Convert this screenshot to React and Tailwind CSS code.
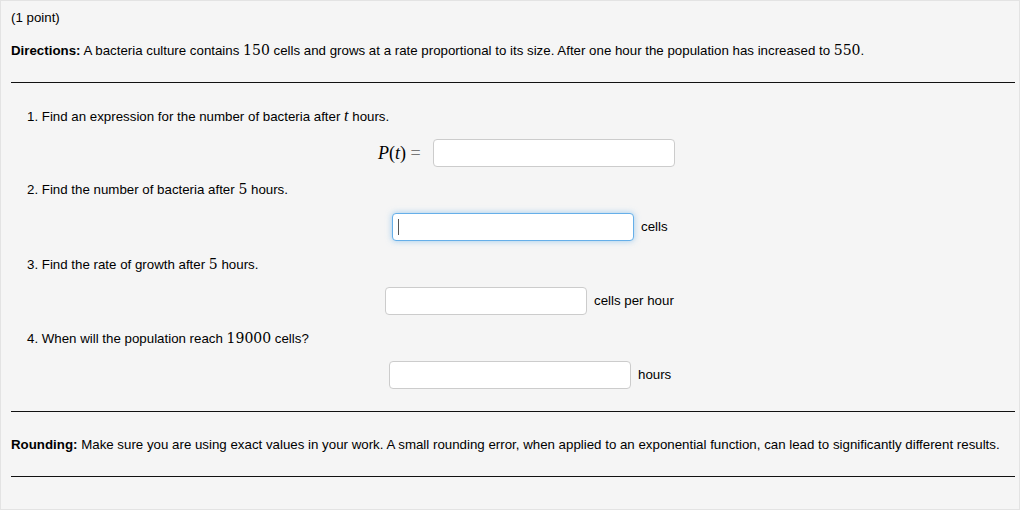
import React from 'react'

const sans = { fontFamily: '"Liberation Sans", Arial, sans-serif' }
const serif = { fontFamily: '"DejaVu Serif", "Liberation Serif", serif' }
const tserif = { fontFamily: '"Liberation Serif", "Times New Roman", serif' }

function M({ children, italic }) {
  return (
    <span
      style={italic ? tserif : serif}
      className={`leading-none ${italic ? 'italic text-[16px]' : 'text-[14px]'}`}
    >
      {children}
    </span>
  )
}

function Blank({ width, focused }) {
  return (
    <div
      className={`relative h-[28px] bg-white rounded-[4px] border ${
        focused
          ? 'border-[#66afe9] shadow-[0_0_6px_rgba(102,175,233,0.6)]'
          : 'border-[#cccccc]'
      }`}
      style={{ width }}
    >
      {focused && <span className="absolute left-[5px] top-[5px] w-px h-[16px] bg-[#555]" />}
    </div>
  )
}

function Rule({ className = '' }) {
  return <div className={`h-px bg-[#111] ${className}`} />
}

export default function App() {
  return (
    <div className="w-[1024px] h-[514px] bg-white text-black text-[13.3px]" style={sans}>
      <div className="w-[1020px] h-[510px] bg-[#f5f5f5] border border-[#e3e3e3] pt-[9px] pl-[10px] pr-[4px]">
        <p className="leading-[16px]">(1 point)</p>

        <p className="leading-[16px] mt-[17px]">
          <b>Directions:</b> A bacteria culture contains <M>150</M> cells and grows at a rate
          proportional to its size. After one hour the population has increased to <M>550</M>.
        </p>

        <Rule className="mt-[23px]" />

        <div className="pl-[16px]">
          <p className="leading-[16px] mt-[25px]">
            1. Find an expression for the number of bacteria after <M italic>t</M> hours.
          </p>
          <div className="flex items-center ml-[351px] mt-[14px]">
            <span style={tserif} className="text-[18px] leading-none mr-[12px]">
              <i>P</i>(<i>t</i>) <span className="text-[#777]">=</span>
            </span>
            <Blank width={242} />
          </div>

          <p className="leading-[16px] mt-[15px]">
            2. Find the number of bacteria after <M>5</M> hours.
          </p>
          <div className="flex items-center ml-[365px] mt-[15px]">
            <Blank width={242} focused />
            <span className="ml-[7px]">cells</span>
          </div>

          <p className="leading-[16px] mt-[16px]">
            3. Find the rate of growth after <M>5</M> hours.
          </p>
          <div className="flex items-center ml-[358px] mt-[14px]">
            <Blank width={202} />
            <span className="ml-[7px]">cells per hour</span>
          </div>

          <p className="leading-[16px] mt-[16px]">
            4. When will the population reach <M>19000</M> cells?
          </p>
          <div className="flex items-center ml-[362px] mt-[14px]">
            <Blank width={242} />
            <span className="ml-[7px]">hours</span>
          </div>
        </div>

        <Rule className="mt-[22px]" />

        <p className="leading-[16px] mt-[25px]">
          <b>Rounding:</b> Make sure you are using exact values in your work. A small rounding error,
          when applied to an exponential function, can lead to significantly different results.
        </p>

        <Rule className="mt-[23px]" />
      </div>
    </div>
  )
}
